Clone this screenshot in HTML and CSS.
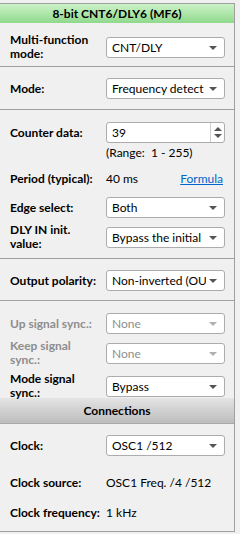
FILE: index.html
```html
<!DOCTYPE html>
<html lang="en">
<head>
    <meta charset="UTF-8">
    <meta name="viewport" content="width=device-width, initial-scale=1.0">
    <title>8-bit CNT6/DLY6 (MF6)</title>
    <link rel="stylesheet" href="styles.css">
</head>
<body>
    <div class="panel">
        <div class="title">8-bit CNT6/DLY6 (MF6)</div>

        <div class="section s1">
            <div class="row">
                <div class="label">Multi-function<br>mode:</div>
                <div class="combo"><span>CNT/DLY</span><i class="arrow"></i></div>
            </div>
        </div>

        <div class="section s2">
            <div class="row">
                <div class="label">Mode:</div>
                <div class="combo"><span>Frequency detect</span><i class="arrow"></i></div>
            </div>
        </div>

        <div class="section s3">
            <div class="row">
                <div class="label">Counter data:</div>
                <div class="spin">
                    <span>39</span>
                    <div class="spin-btns">
                        <i class="up"></i>
                        <i class="down"></i>
                    </div>
                </div>
            </div>
            <div class="hint">(Range:&nbsp; 1 - 255)</div>
            <div class="row text-row period">
                <div class="label">Period (typical):</div>
                <div class="value">40 ms</div>
                <a class="link" href="#">Formula</a>
            </div>
            <div class="row edge">
                <div class="label">Edge select:</div>
                <div class="combo"><span>Both</span><i class="arrow"></i></div>
            </div>
            <div class="row next">
                <div class="label">DLY IN init.<br>value:</div>
                <div class="combo"><span>Bypass the initial</span><i class="arrow"></i></div>
            </div>
        </div>

        <div class="section s4">
            <div class="row">
                <div class="label">Output polarity:</div>
                <div class="combo"><span>Non-inverted (OUT)</span><i class="arrow"></i></div>
            </div>
        </div>

        <div class="section s5">
            <div class="row disabled">
                <div class="label">Up signal sync.:</div>
                <div class="combo"><span>None</span><i class="arrow"></i></div>
            </div>
            <div class="row next disabled">
                <div class="label">Keep signal<br>sync.:</div>
                <div class="combo"><span>None</span><i class="arrow"></i></div>
            </div>
            <div class="row next">
                <div class="label">Mode signal<br>sync.:</div>
                <div class="combo"><span>Bypass</span><i class="arrow"></i></div>
            </div>
        </div>

        <div class="subtitle">Connections</div>

        <div class="section s6">
            <div class="row">
                <div class="label">Clock:</div>
                <div class="combo"><span>OSC1 /512</span><i class="arrow"></i></div>
            </div>
            <div class="row text-row src">
                <div class="label">Clock source:</div>
                <div class="value">OSC1 Freq. /4 /512</div>
            </div>
            <div class="row text-row freq">
                <div class="label">Clock frequency:</div>
                <div class="value">1 kHz</div>
            </div>
        </div>
    </div>
</body>
</html>
```

FILE: styles.css
```css
body {
    font-family: 'Lato', 'Noto Sans', sans-serif;
    font-size: 12px;
    color: #000;
    background: #f0f0f0;
    margin: 0;
}
.panel {
    width: 234px;
    margin-top: 3px;
    border-top: 1px solid #a0a0a0;
    border-right: 1px solid #a0a0a0;
    border-bottom: 1px solid #a0a0a0;
    background: #f0f0f0;
}
.title {
    height: 19px;
    line-height: 19px;
    text-align: center;
    font-weight: bold;
    background: linear-gradient(#cdf2c8, #8fd98c);
}
.section {
    border-bottom: 1px solid #a0a0a0;
    padding: 0 9px 0 10px;
}
.s1 { padding-top: 10px; height: 33px; }
.s2 { padding-top: 11px; height: 31px; }
.s3 { padding-top: 12px; height: 136px; }
.s4 { padding-top: 11px; height: 30px; }
.s5 { padding-top: 12px; height: 85px; border-bottom: none; }
.s6 { padding-top: 11px; height: 96px; border-bottom: none; }
.row {
    display: flex;
    align-items: center;
    min-height: 21px;
}
.row.next {
    margin-top: 5px;
}
.label {
    width: 96px;
    flex: none;
    font-weight: bold;
    line-height: 14px;
    white-space: nowrap;
}
.combo,
.spin {
    position: relative;
    flex: 1;
    height: 21px;
    box-sizing: border-box;
    border: 1px solid #acacac;
    border-radius: 3px;
    background: #fff;
    padding-left: 5px;
    padding-right: 18px;
    line-height: 19px;
    white-space: nowrap;
    overflow: hidden;
}
.combo span {
    display: block;
    overflow: hidden;
}
.arrow {
    position: absolute;
    right: 7px;
    top: 8px;
    width: 0;
    height: 0;
    border-left: 4px solid transparent;
    border-right: 4px solid transparent;
    border-top: 4px solid #555;
}
.spin-btns {
    position: absolute;
    right: 0;
    top: 0;
    bottom: 0;
    width: 13px;
    border-left: 1px solid #d0d0d0;
}
.spin-btns i {
    position: absolute;
    left: 3px;
    width: 0;
    height: 0;
    border-left: 4px solid transparent;
    border-right: 4px solid transparent;
}
.spin-btns .up {
    top: 4px;
    border-bottom: 4px solid #555;
}
.spin-btns .down {
    bottom: 4px;
    border-top: 4px solid #555;
}
.hint {
    margin: 3px 0 0 96px;
    line-height: 13px;
}
.text-row .value {
    flex: 1;
}
.period {
    margin-top: 9px;
}
.edge {
    margin-top: 8px;
}
.link {
    color: #0066cc;
    text-decoration: underline;
    margin-right: 2px;
}
.disabled .label,
.disabled .combo {
    color: #8d8d8d;
}
.disabled .arrow {
    border-top-color: #b0b0b0;
}
.subtitle {
    height: 25px;
    line-height: 25px;
    text-align: center;
    font-weight: bold;
    background: linear-gradient(#e4e4e4, #bdbdbd);
    border-bottom: 1px solid #a8a8a8;
}
.src {
    margin-top: 16px;
}
.freq {
    margin-top: 9px;
}
```
